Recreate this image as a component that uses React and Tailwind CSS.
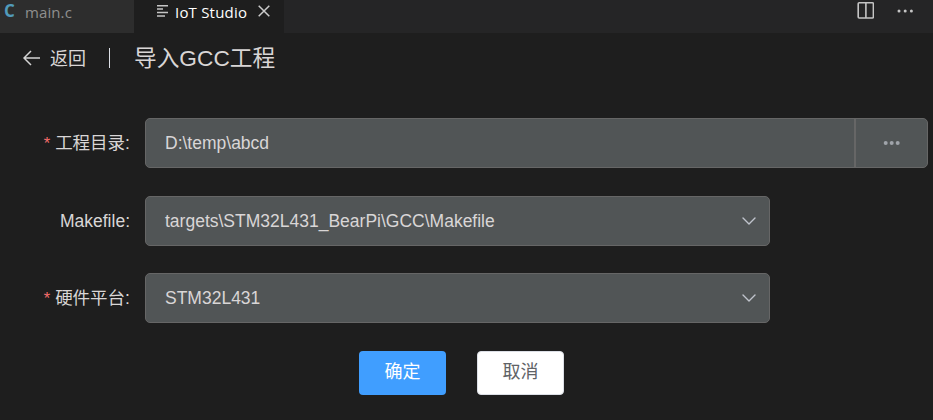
import React from "react";

function Chevron() {
  return (
    <svg width="16" height="16" viewBox="0 0 16 16" fill="none" stroke="#c0c4cc" strokeWidth="1.4" strokeLinecap="round" strokeLinejoin="round">
      <path d="M2 5l6 6 6-6" />
    </svg>
  );
}

function Label({ required, children }) {
  return (
    <div className="w-[130px] flex shrink-0 justify-end whitespace-nowrap">
      {required && <span className="mr-[5px] text-[16.5px] text-[#f56c6c]">*</span>}
      {children}
    </div>
  );
}

function SelectBox({ children }) {
  return (
    <div className="ml-[15px] flex h-[50px] w-[625px] items-center justify-between rounded-[5px] border border-[#666666] bg-[#515556] pl-[19px] pr-[12px]">
      {children}
      <Chevron />
    </div>
  );
}

function TabBar() {
  return (
    <div className="flex h-[33px] bg-[#252526] font-['Open_Sans','Noto_Sans',sans-serif] text-[15px] leading-[24px]">
      <div className="flex w-[134px] bg-[#2d2d2d] pl-[4px]">
        <span className="w-[21px] text-[17px] font-bold leading-[22px] text-[#519aba]">C</span>
        <span className="tracking-[0.1px] text-[#8f8f8f]">main.c</span>
      </div>
      <div className="flex w-[150px] bg-[#1e1e1e] pl-[22px]">
        <svg className="mt-[5px] shrink-0" width="13" height="13" viewBox="0 0 13 13" stroke="#c5c5c5" strokeWidth="1.4">
          <path d="M1 .7h11M1 4h6M1 7.5h11M1 11h8" />
        </svg>
        <span className="ml-[6px] w-[73px] whitespace-nowrap tracking-[0.2px] text-white">IoT Studio</span>
        <svg className="ml-[10px] mt-[5px] shrink-0" width="12" height="12" viewBox="0 0 12 12" stroke="#cccccc" strokeWidth="1.5">
          <path d="M.7.7l10.6 10.6M11.3.7L.7 11.3" />
        </svg>
      </div>
      <div className="flex flex-1 justify-end pr-[19px]">
        <svg className="mt-[2px]" width="17" height="17" viewBox="0 0 17 17" fill="none" stroke="#c5c5c5" strokeWidth="1.6">
          <rect x="1.2" y=".8" width="15.2" height="15.2" rx="1" />
          <path d="M8.9 1v15" />
        </svg>
        <svg className="ml-[23px] mt-[9px]" width="17" height="4" viewBox="0 0 17 4" fill="#c5c5c5">
          <circle cx="2" cy="2" r="1.5" />
          <circle cx="8.2" cy="2" r="1.5" />
          <circle cx="14.4" cy="2" r="1.5" />
        </svg>
      </div>
    </div>
  );
}

export default function App() {
  return (
    <div className="h-[420px] w-[933px] overflow-hidden bg-[#1e1e1e] font-['Liberation_Sans','Noto_Sans_CJK_SC',sans-serif] text-[17.5px] leading-[26px] text-[#d9d6d6]">
      <TabBar />
      <div className="flex h-[50px] items-center pl-[23px]">
        <svg width="18" height="16" viewBox="0 0 18 16" fill="none" stroke="#d4d4d4" strokeWidth="1.5">
          <path d="M8 1L1 8l7 7M1 8h16" />
        </svg>
        <span className="ml-[9px] mt-px w-[36px] whitespace-nowrap text-[18px]">返回</span>
        <div className="ml-[23px] h-[20px] w-px bg-[#dcdfe6]" />
        <span className="ml-[24px] whitespace-nowrap text-[22.7px]">导入GCC工程</span>
      </div>
      <div className="mt-[35px] flex items-center">
        <Label required>工程目录:</Label>
        <div className="ml-[15px] flex h-[50px] w-[783px] overflow-hidden rounded-[5px] border border-[#666666] bg-[#515556]">
          <div className="flex w-[708px] items-center pl-[19px]">D:\temp\abcd</div>
          <div className="flex flex-1 items-center justify-center border-l-2 border-[#666666]">
            <svg className="mb-px" width="18" height="4" viewBox="0 0 18 4" fill="#a0a4aa">
              <circle cx="2.7" cy="2" r="2" />
              <circle cx="8.7" cy="2" r="2" />
              <circle cx="14.7" cy="2" r="2" />
            </svg>
          </div>
        </div>
      </div>
      <div className="mt-[28px] flex items-center">
        <Label>Makefile:</Label>
        <SelectBox>targets\STM32L431_BearPi\GCC\Makefile</SelectBox>
      </div>
      <div className="mt-[27px] flex items-center">
        <Label required>硬件平台:</Label>
        <SelectBox>STM32L431</SelectBox>
      </div>
      <div className="mt-[28px] flex gap-[31px] pl-[359px]">
        <button className="h-[44px] w-[87px] rounded-[4px] bg-[#409eff] pb-[2px] text-[18px] text-white">确定</button>
        <button className="h-[44px] w-[87px] rounded-[4px] border border-[#dcdfe6] bg-white pb-[2px] text-[18px] text-[#606266]">取消</button>
      </div>
    </div>
  );
}
